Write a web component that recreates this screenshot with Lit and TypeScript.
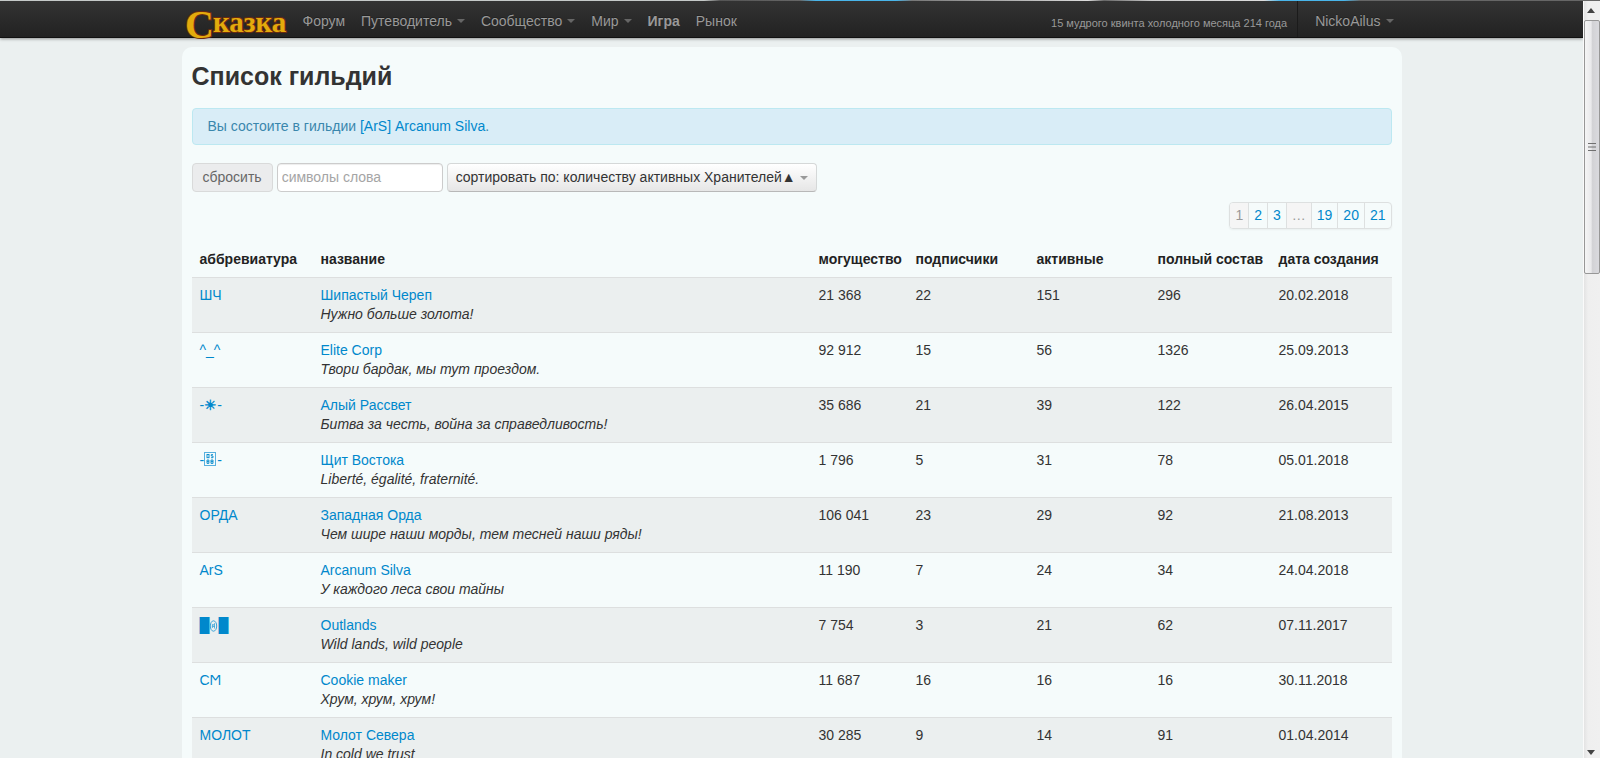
import { LitElement, html, css, TemplateResult } from "lit";
import { customElement, property } from "lit/decorators.js";

interface Guild {
  abbr: string | TemplateResult;
  name: string;
  motto: string;
  might: string;
  subscribers: number;
  active: number;
  total: number;
  created: string;
}

const sunGlyph = html`-<b>☀</b>-`;

const boxedGlyph = html`<span>-</span><svg class="box" width="13" height="14" viewBox="0 0 13 14" role="img" aria-label="символ">
    <rect x="0.5" y="0.5" width="11" height="13" fill="none" stroke="#58b0de"></rect>
    <g fill="none" stroke="#0088cc" stroke-width="0.9">
      <rect x="3" y="2.5" width="2" height="3.2"></rect>
      <path d="M9 2.6H7.3V4H9V5.7H7"></path>
      <path d="M3 8V11.4H4.9V8ZM3 9.6H4.9M7 8H9V11.4H7ZM7 9.6H9"></path>
    </g>
  </svg><span>-</span>`;

const eyeGlyph = html`<span>█</span><svg class="eye" width="9" height="12" viewBox="0 0 9 12" role="img" aria-label="глаз">
    <ellipse cx="4.5" cy="6" rx="3.2" ry="5.2" fill="none" stroke="#3ba3d8"></ellipse>
    <path d="M3.5 6.2L5.5 3.5V8.5M3.3 6.5H5.8M3.4 4V8" fill="none" stroke="#3ba3d8" stroke-width="0.8"></path>
  </svg><span>█</span>`;

const guilds: Guild[] = [
  { abbr: "ШЧ", name: "Шипастый Череп", motto: "Нужно больше золота!", might: "21 368", subscribers: 22, active: 151, total: 296, created: "20.02.2018" },
  { abbr: "^_^", name: "Elite Corp", motto: "Твори бардак, мы тут проездом.", might: "92 912", subscribers: 15, active: 56, total: 1326, created: "25.09.2013" },
  { abbr: sunGlyph, name: "Алый Рассвет", motto: "Битва за честь, война за справедливость!", might: "35 686", subscribers: 21, active: 39, total: 122, created: "26.04.2015" },
  { abbr: boxedGlyph, name: "Щит Востока", motto: "Liberté, égalité, fraternité.", might: "1 796", subscribers: 5, active: 31, total: 78, created: "05.01.2018" },
  { abbr: "ОРДА", name: "Западная Орда", motto: "Чем шире наши морды, тем тесней наши ряды!", might: "106 041", subscribers: 23, active: 29, total: 92, created: "21.08.2013" },
  { abbr: "ArS", name: "Arcanum Silva", motto: "У каждого леса свои тайны", might: "11 190", subscribers: 7, active: 24, total: 34, created: "24.04.2018" },
  { abbr: eyeGlyph, name: "Outlands", motto: "Wild lands, wild people", might: "7 754", subscribers: 3, active: 21, total: 62, created: "07.11.2017" },
  { abbr: "CϺ", name: "Cookie maker", motto: "Хрум, хрум, хрум!", might: "11 687", subscribers: 16, active: 16, total: 16, created: "30.11.2018" },
  { abbr: "МОЛОТ", name: "Молот Севера", motto: "In cold we trust", might: "30 285", subscribers: 9, active: 14, total: 91, created: "01.04.2014" },
];

@customElement("site-nav")
export class SiteNav extends LitElement {
  static styles = css`
    :host {
      display: block;
      position: relative;
      background: linear-gradient(#333, #222);
      border-bottom: 1px solid #111;
      box-shadow: 0 1px 3px rgba(0, 0, 0, 0.4);
      color: #999;
    }
    .inner {
      display: flex;
      max-width: 1220px;
      height: 36px;
      margin: 0 auto;
    }
    .logo {
      width: 110px;
      margin-left: 3px;
      text-decoration: none;
    }
    .logo svg { display: block; overflow: visible; }
    .logo text {
      font-family: "Liberation Serif", serif;
      font-weight: bold;
      fill: #e3ab0c;
      stroke: #6b2a10;
      stroke-width: 2px;
      paint-order: stroke;
    }
    nav, .user { display: flex; }
    .user { margin-left: auto; }
    a.item {
      display: flex;
      align-items: center;
      gap: 5px;
      padding: 4px 8px 0;
      color: #999;
      text-decoration: none;
      text-shadow: 0 -1px 0 rgba(0, 0, 0, 0.25);
    }
    .bold { font-weight: bold; }
    .item.drop::after {
      content: "";
      border: 4px solid transparent;
      border-top-color: #666;
      border-bottom: 0;
    }
    .date {
      padding: 4px 10px 0 0;
      font-size: 11px;
      line-height: 36px;
      border-right: 1px solid #1b1b1b;
    }
    a.item.name { padding-left: 17px; }
  `;

  render() {
    return html`
      <div class="inner">
        <a class="logo" href="#" aria-label="Сказка">
          <svg width="101" height="42" viewBox="0 0 101 42">
            <text x="0" y="37" font-size="40">С</text>
            <text x="28" y="31" font-size="29">казка</text>
          </svg>
        </a>
        <nav>
          <a class="item" href="#">Форум</a>
          <a class="item drop" href="#">Путеводитель</a>
          <a class="item drop" href="#">Сообщество</a>
          <a class="item drop" href="#">Мир</a>
          <a class="item bold" href="#">Игра</a>
          <a class="item" href="#">Рынок</a>
        </nav>
        <div class="user">
          <span class="date">15 мудрого квинта холодного месяца 214 года</span>
          <a class="item drop name" href="#">NickoAilus</a>
        </div>
      </div>
    `;
  }
}

@customElement("guild-table")
export class GuildTable extends LitElement {
  @property({ attribute: false }) rows: Guild[] = [];

  static styles = css`
    :host { display: block; }
    table {
      width: 100%;
      table-layout: fixed;
      border-collapse: separate;
      border-spacing: 0;
    }
    .col { width: 121px; }
    .might { width: 97px; }
    th, td {
      padding: 8px;
      text-align: left;
      vertical-align: top;
      line-height: 19px;
      white-space: nowrap;
    }
    th { color: #222; }
    td { border-top: 1px solid #dddfdf; }
    tbody tr:nth-child(odd) td { background: #ebefef; }
    a { color: #0088cc; text-decoration: none; }
    em { display: block; }
    .box { vertical-align: -1px; }
    .eye { vertical-align: -2px; }
  `;

  render() {
    return html`
      <table>
        <colgroup>
          <col class="col" /><col /><col class="might" /><col class="col" />
          <col class="col" /><col class="col" /><col class="col" />
        </colgroup>
        <thead>
          <tr>
            <th>аббревиатура</th><th>название</th><th>могущество</th><th>подписчики</th>
            <th>активные</th><th>полный состав</th><th>дата создания</th>
          </tr>
        </thead>
        <tbody>
          ${this.rows.map((g) => html`
            <tr>
              <td><a href="#">${g.abbr}</a></td>
              <td><a href="#">${g.name}</a><em>${g.motto}</em></td>
              <td>${g.might}</td>
              <td>${g.subscribers}</td>
              <td>${g.active}</td>
              <td>${g.total}</td>
              <td>${g.created}</td>
            </tr>`)}
        </tbody>
      </table>
    `;
  }
}

@customElement("scroll-track")
export class ScrollTrack extends LitElement {
  static styles = css`
    :host {
      display: flex;
      flex-direction: column;
      flex: none;
      box-sizing: border-box;
      width: 17px;
      background: linear-gradient(90deg, #e3e3e3, #efefef 4px, #f0f0f0);
      border-left: 1px solid #fafafa;
    }
    .arrow { flex: none; display: block; }
    .thumb {
      display: flex;
      align-items: center;
      justify-content: center;
      height: 33.6%;
      box-sizing: border-box;
      border: 1px solid #979797;
      border-radius: 2px;
      background: linear-gradient(90deg, #f5f5f5, #e9e9eb 45%, #d2d2d5 50%, #dadade);
    }
    .space { flex: 1; }
  `;

  render() {
    return html`
      <svg class="arrow" width="16" height="19"><path d="M3 12L7 7L11 12Z" fill="#444"></path></svg>
      <div class="thumb">
        <svg width="8" height="10"><path d="M0 1.5H8M0 5H8M0 8.5H8" stroke="#707070" stroke-width="1.2"></path></svg>
      </div>
      <div class="space"></div>
      <svg class="arrow" width="16" height="12"><path d="M3 4L7 9L11 4Z" fill="#444"></path></svg>
    `;
  }
}

@customElement("app-root")
export class AppRoot extends LitElement {
  static styles = css`
    :host {
      display: flex;
      flex-direction: column;
      height: 100vh;
      overflow: hidden;
      font: 14px/19px "Liberation Sans", Arial, sans-serif;
      color: #333;
    }
    .strip {
      flex: none;
      height: 1px;
      background: linear-gradient(90deg, #c5c9c8 44%, #555 45%, #666 50%, #49b5ea 51%, #49b5ea 56%, #777 57%, #ddd 68%, #666 69%, #ccc 72%, #ddd 79%, #49b5ea 80%, #49b5ea 84%, #666 85%);
    }
    .frame { display: flex; flex: 1; min-height: 0; }
    .page { flex: 1; min-width: 0; overflow: hidden; background: #ebf0f0; }
    .panel {
      max-width: 1200px;
      margin: 9px auto 0;
      padding: 10px;
      border-radius: 10px;
      background: #f5fbfb;
    }
    h1 { margin: 0; font-size: 25px; line-height: 38px; }
    .alert {
      margin: 13px 0 18px;
      padding: 8px 15px;
      border: 1px solid #bce8f1;
      border-radius: 4px;
      background: #d9edf7;
      color: #3a87ad;
    }
    a { color: #0088cc; text-decoration: none; }
    .filters { display: flex; gap: 4px; }
    button, input {
      box-sizing: border-box;
      height: 29px;
      margin: 0;
      border: 1px solid #ccc;
      border-radius: 4px;
      font: inherit;
    }
    .reset { padding: 0 10px; background: #ebeced; border-color: #d9dada; color: #666; }
    input { width: 166px; padding: 0 4px 1px; background: #fff; box-shadow: inset 0 1px 1px rgba(0, 0, 0, 0.075); }
    input::placeholder { color: #a5a5a5; opacity: 1; }
    .sort {
      display: flex;
      align-items: center;
      gap: 4px;
      padding: 0 8px;
      border-color: #d5d8d8 #d5d8d8 #b8b8b8;
      background: linear-gradient(#fff, #e6e6e6);
      color: #333;
    }
    .sort::after {
      content: "";
      border: 4px solid transparent;
      border-top-color: #999;
      border-bottom: 0;
    }
    .pages {
      display: flex;
      width: fit-content;
      margin: 10px 0 13px auto;
      border: 1px solid #dde0e0;
      border-radius: 4px;
      box-shadow: 0 1px 2px rgba(0, 0, 0, 0.05);
      overflow: hidden;
    }
    .pages > * { padding: 0 5px; line-height: 25px; }
    .pages > * + * { border-left: 1px solid #dde0e0; }
    .pages .off { background: #f5f5f5; color: #999; }
  `;

  render() {
    return html`
      <div class="strip"></div>
      <div class="frame">
        <div class="page">
          <site-nav></site-nav>
          <main class="panel">
            <h1>Список гильдий</h1>
            <div class="alert">Вы состоите в гильдии <a href="#">[ArS] Arcanum Silva</a>.</div>
            <div class="filters">
              <button class="reset" type="button">сбросить</button>
              <input type="text" placeholder="символы слова" aria-label="символы слова" />
              <button class="sort" type="button">сортировать по: количеству активных Хранителей▲</button>
            </div>
            <nav class="pages" aria-label="Страницы">
              <span class="off">1</span><a href="#">2</a><a href="#">3</a><span class="off">…</span><a href="#">19</a><a href="#">20</a><a href="#">21</a>
            </nav>
            <guild-table .rows=${guilds}></guild-table>
          </main>
        </div>
        <scroll-track aria-hidden="true"></scroll-track>
      </div>
    `;
  }
}
